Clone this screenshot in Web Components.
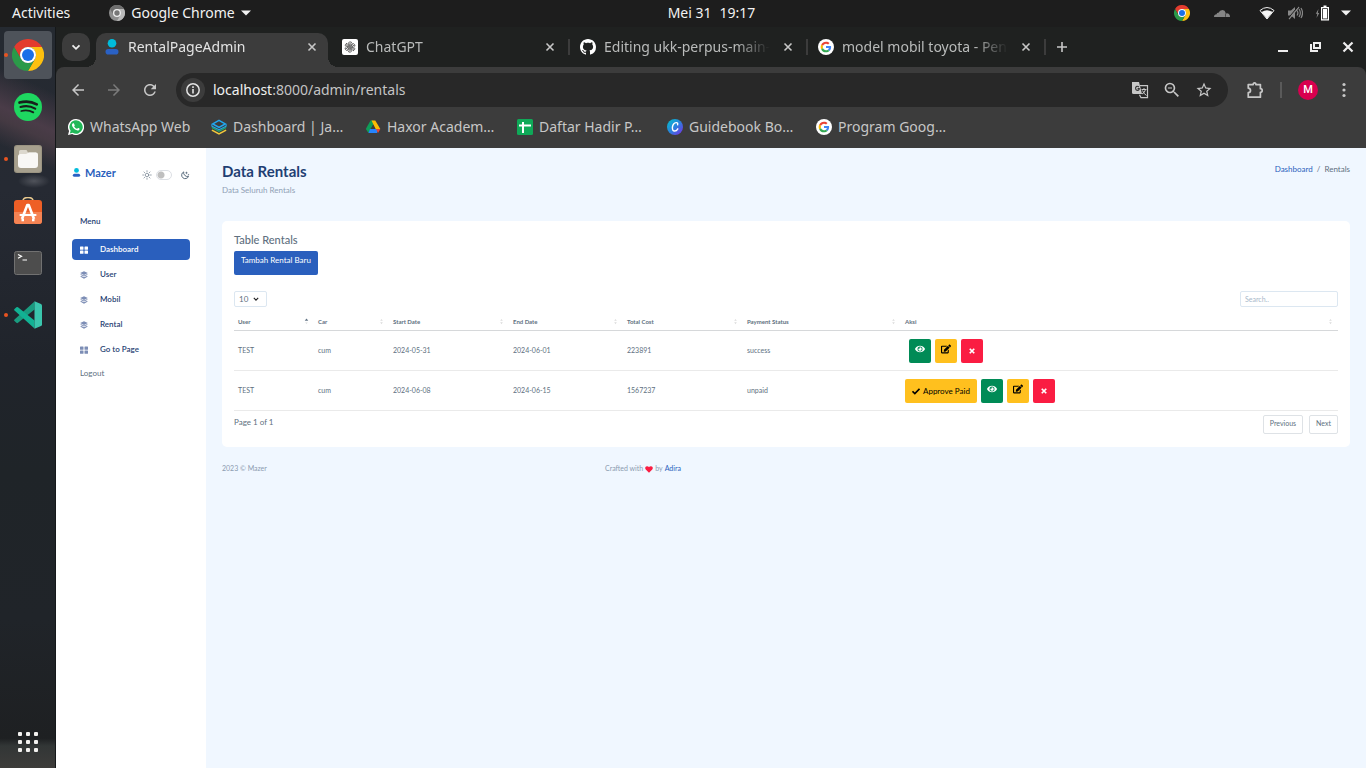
<!DOCTYPE html>
<html lang="id">
<head>
<meta charset="utf-8">
<title>RentalPageAdmin</title>
<style>
  html, body { height: 100%; margin: 0; }
  body { overflow: hidden; background: #1d1d1d; font-family: "Noto Sans", "Open Sans", sans-serif; }
</style>
</head>
<body>
<desk-top></desk-top>

<script>
const chromeLogo = (r, y, g, b) => `<svg viewBox="0 0 48 48"><path fill="${r}" d="M24 12h20.8A24 24 0 0 0 3.2 12l10.4 18A12 12 0 0 1 24 12z"/><path fill="${y}" d="M24 12h20.8A24 24 0 0 1 24 48l10.4-18A12 12 0 0 0 24 12z"/><path fill="${g}" d="M13.600 30L3.200 12A24 24 0 0 0 24 48l10.400-18A12 12 0 0 1 13.600 30z"/><circle cx="24" cy="24" r="12" fill="#fff"/><circle cx="24" cy="24" r="9" fill="${b}"/></svg>`;

const PETAL = 'M9.300 11.500V6.500q0-2.800 2.800-3 1.600 0 2.700 1.100l-4 2.300v5.300';

const ICONS = {
  chrome: chromeLogo('#e33b2e', '#fdc00f', '#2b9a49', '#1a6fe8'),
  chromeGray: `<svg viewBox="0 0 48 48"><circle cx="24" cy="24" r="24" fill="#8f8f8f"/><path fill="#b9b9b9" d="M24 12h20.800A24 24 0 0 1 24 48l10.400-18A12 12 0 0 0 24 12z"/><path fill="#6f6f6f" d="M24 12h20.800A24 24 0 0 0 3.200 12l8 14A13 13 0 0 1 24 12z"/><circle cx="24" cy="24" r="12" fill="#efefef"/><circle cx="24" cy="24" r="8" fill="#777"/></svg>`,
  spotify: `<svg viewBox="0 0 28 28"><circle cx="14" cy="14" r="14" fill="#1ed760"/><g fill="none" stroke="#17201b" stroke-linecap="round"><path stroke-width="2.600" d="M5.500 9.600c6-1.700 12.400-1 17.300 1.700"/><path stroke-width="2.200" d="M6.500 14c5-1.400 10.500-.8 14.700 1.600"/><path stroke-width="1.800" d="M7.300 18c4.300-1.100 8.500-.6 12 1.400"/></g></svg>`,
  files: `<svg viewBox="0 0 28 28"><rect width="28" height="28" rx="3" fill="#9b9482"/><rect x="1" y="1" width="26" height="26" rx="3" fill="#a7a08e"/><path fill="#dcd8ce" d="M5 6.500Q5 5 6.500 5h6L14 7.500h8V12H5z"/><path fill="#f8f7f5" d="M4 11.500Q4 9 6.500 9H12l3-1.500h7q2 0 2 2V20q0 3-3 3H7q-3 0-3-3z"/></svg>`,
  software: `<svg viewBox="0 2 28 28"><path d="M9 6q0-3.500 5-3.500t5 3.500" fill="none" stroke="#e8c98f" stroke-width="1.500"/><rect y="5" width="28" height="24" rx="3" fill="#ee5f26"/><path fill="#f58353" d="M0 17h28v9q0 3-3 3H3q-3 0-3-3z"/><path fill="none" stroke="#fff" stroke-width="2.600" stroke-linejoin="round" d="M8 24L13.300 10h1.400L20 24M7.500 25h2.500M18 25h2.500"/><path stroke="#fff" stroke-width="2.200" stroke-linecap="round" d="M6.500 20h15"/></svg>`,
  terminal: `<svg viewBox="0 0 28 28"><rect x=".5" y="2.500" width="27" height="23" rx="2" fill="#4d4d4d" stroke="#717171"/><path d="M4 5.500l3.500 1.800L4 9.200M8.500 11h4.500" fill="none" stroke="#fff" stroke-width="1.200"/></svg>`,
  vscode: `<svg viewBox="0 0 28 28"><path fill="#1a9c80" d="M20.500.5v8L4 21.800q-.8.700-1.600 0L.5 20q-.8-.8 0-1.600z"/><path fill="#12b294" d="M20.500 27.500v-8L4 6.300q-.8-.7-1.600 0L.5 8q-.8.800 0 1.600z"/><path fill="#3ac6ad" d="M20.500.3L27 3q1 .5 1 1.600v19q0 1-1 1.500l-6.500 2.700z"/></svg>`,
  apps: `<svg viewBox="0 0 20 20" fill="#f2f1ef"><rect width="4" height="4" rx="1"/><rect x="8" width="4" height="4" rx="1"/><rect x="16" width="4" height="4" rx="1"/><rect y="8" width="4" height="4" rx="1"/><rect x="8" y="8" width="4" height="4" rx="1"/><rect x="16" y="8" width="4" height="4" rx="1"/><rect y="16" width="4" height="4" rx="1"/><rect x="8" y="16" width="4" height="4" rx="1"/><rect x="16" y="16" width="4" height="4" rx="1"/></svg>`,
  triangle: `<svg viewBox="0 0 10 10"><path fill="currentColor" d="M0 2.500h10L5 7.500z"/></svg>`,
  cloud: `<svg viewBox="0 0 16 16"><path fill="#858585" d="M0 12q0-2.700 2.600-2.800Q2.800 7.600 4.500 7.800 5.800 5 8.500 5q2.600.2 3.200 3L11 12z"/><path fill="#858585" d="M12.200 8.400Q15.800 8 16 12h-4.600z"/></svg>`,
  wifi: `<svg viewBox="0 0 16 16"><path d="M1 5.500Q8-.5 15 5.500L8 14z" fill="none" stroke="#eee" stroke-width="1"/><path fill="#f4f4f4" d="M2.600 7Q8 3.500 13.400 7L8 13.800z"/></svg>`,
  mute: `<svg viewBox="0 0 16 16"><path fill="#888" d="M1 5.500h3L8 2v12l-4-3.500H1z"/><path d="M10 5.500q1.800 2.500 0 5M12 4q2.700 4 0 8M14 3q3 5 0 10M2 14L12 2" fill="none" stroke="#888" stroke-width="1.200"/><path d="M1 13.500L11 1.500" stroke="#1d1d1d" stroke-width="1"/></svg>`,
  battery: `<svg viewBox="0 0 16 16"><path fill="#8a8a8a" d="M3.500 4L.8 8.800h1.500L1.500 13 4.300 8H2.800z"/><path fill="#fff" fill-rule="evenodd" d="M8.500.5h3V2H14v13.500H6V2h2.500zM7.200 3.200v11h5.600v-11z"/><path fill="#fff" d="M8 4h4v9.500H8z"/></svg>`,
  mazer: `<svg viewBox="0 0 16 16"><circle cx="8" cy="4.300" r="4.300" fill="#00bcdc"/><rect x="1.500" y="10" width="13" height="5.600" rx="2.800" fill="#2a61c4"/></svg>`,
  close: `<svg viewBox="0 0 16 16"><path d="M4.500 4.500l7 7m0-7l-7 7" stroke="currentColor" stroke-width="1.600"/></svg>`,
  chevron: `<svg viewBox="0 0 16 16"><path d="M4.500 6.300L8 9.800l3.500-3.500" fill="none" stroke="currentColor" stroke-width="1.800"/></svg>`,
  plus: `<svg viewBox="0 0 16 16"><path d="M8 3v10M3 8h10" stroke="currentColor" stroke-width="1.600"/></svg>`,
  openai: `<svg viewBox="0 0 24 24"><rect width="24" height="24" rx="3" fill="#fff"/><g fill="none" stroke="#333" stroke-width="1.100" transform="translate(1 1) scale(.92)">${[0, 60, 120, 180, 240, 300].map(a => `<path transform="rotate(${a} 12 12)" d="${PETAL}"/>`).join('')}</g></svg>`,
  github: `<svg viewBox="0 0 16 16"><path fill="#fff" d="M8 0C3.580 0 0 3.580 0 8c0 3.540 2.290 6.530 5.470 7.590.4.070.55-.17.55-.38 0-.19-.01-.82-.01-1.490-2.010.37-2.530-.49-2.690-.94-.09-.23-.48-.94-.82-1.130-.28-.15-.68-.52-.01-.53.63-.01 1.080.58 1.230.82.72 1.210 1.870.87 2.330.66.07-.52.28-.87.51-1.070-1.780-.2-3.640-.89-3.640-3.950 0-.87.31-1.590.82-2.150-.08-.2-.36-1.020.08-2.120 0 0 .67-.21 2.200.82.64-.18 1.320-.27 2-.27s1.360.09 2 .27c1.530-1.040 2.200-.82 2.200-.82.44 1.100.16 1.920.08 2.120.51.56.82 1.270.82 2.150 0 3.070-1.870 3.750-3.650 3.950.29.25.54.73.54 1.480 0 1.070-.01 1.930-.01 2.200 0 .21.15.46.55.38A8.010 8.010 0 0 0 16 8c0-4.420-3.580-8-8-8z"/></svg>`,
  google: `<svg viewBox="-12 -12 72 72"><circle cx="24" cy="24" r="36" fill="#fff"/><path fill="#EA4335" d="M24 9.500c3.540 0 6.710 1.220 9.210 3.600l6.850-6.850C35.900 2.380 30.470 0 24 0 14.620 0 6.510 5.380 2.560 13.220l7.980 6.190C12.430 13.720 17.740 9.500 24 9.500z"/><path fill="#4285F4" d="M46.980 24.550c0-1.570-.15-3.090-.38-4.550H24v9.020h12.940c-.58 2.960-2.260 5.480-4.780 7.180l7.730 6c4.510-4.180 7.090-10.360 7.090-17.650z"/><path fill="#FBBC05" d="M10.530 28.590c-.48-1.450-.76-2.990-.76-4.590s.27-3.140.76-4.590l-7.980-6.190C.92 16.460 0 20.120 0 24c0 3.880.92 7.540 2.560 10.780l7.970-6.190z"/><path fill="#34A853" d="M24 48c6.480 0 11.930-2.130 15.890-5.810l-7.730-6c-2.150 1.450-4.920 2.300-8.160 2.300-6.260 0-11.570-4.220-13.470-9.910l-7.980 6.190C6.510 42.620 14.620 48 24 48z"/></svg>`,
  back: `<svg viewBox="0 0 24 24"><path fill="currentColor" d="M20 11H7.830l5.590-5.590L12 4l-8 8 8 8 1.410-1.410L7.830 13H20v-2z"/></svg>`,
  forward: `<svg viewBox="0 0 24 24"><path fill="currentColor" d="M12 4l-1.410 1.410L16.170 11H4v2h12.170l-5.580 5.590L12 20l8-8z"/></svg>`,
  reload: `<svg viewBox="0 0 24 24"><path fill="currentColor" d="M17.650 6.350C16.200 4.900 14.210 4 12 4c-4.420 0-7.990 3.580-7.990 8s3.570 8 7.990 8c3.730 0 6.840-2.550 7.730-6h-2.080c-.82 2.330-3.040 4-5.650 4-3.310 0-6-2.690-6-6s2.690-6 6-6c1.660 0 3.140.69 4.220 1.780L13 11h7V4l-2.350 2.350z"/></svg>`,
  info: `<svg viewBox="0 0 16 16"><circle cx="8" cy="8" r="6.200" fill="none" stroke="currentColor" stroke-width="1.500"/><path fill="currentColor" d="M7.200 7h1.600v4.500H7.200zM7.200 4.300h1.600v1.600H7.200z"/></svg>`,
  translate: `<svg viewBox="0 0 18 18"><path fill="#c7c7c7" d="M1 1h7l3 12H2.500Q1 13 1 11.500z"/><path d="M8 6Q5.500 4.300 4.600 6.800 4.500 9.500 7 9.400 8.500 9 8.300 7.600H6.600" fill="none" stroke="#333" stroke-width="1.100"/><path d="M9 4.700h7.500v12H10l-1.500-3" fill="none" stroke="#c7c7c7" stroke-width="1.200"/><path d="M10.500 8.500h5M13 7v1.500M14.500 8.500q-.8 3.500-3.500 4.500M11.500 9.500q1.500 3.500 4 5" fill="none" stroke="#c7c7c7"/></svg>`,
  zoomOut: `<svg viewBox="1 1 22 22"><path fill="currentColor" d="M15.500 14h-.79l-.28-.27A6.470 6.470 0 0 0 16 9.500 6.500 6.500 0 1 0 9.500 16c1.610 0 3.090-.59 4.230-1.570l.27.28v.79l5 4.990L20.490 19l-4.990-5zm-6 0C7.010 14 5 11.990 5 9.500S7.010 5 9.500 5 14 7.010 14 9.500 11.990 14 9.500 14zM7 8.800h5v1.500H7z"/></svg>`,
  star: `<svg viewBox="0 0 24 24"><path fill="currentColor" d="M22 9.240l-7.190-.62L12 2 9.190 8.630 2 9.240l5.460 4.730L5.820 21 12 17.270 18.180 21l-1.630-7.030L22 9.240zM12 15.400l-3.760 2.270 1-4.280-3.320-2.880 4.380-.38L12 6.100l1.710 4.040 4.380.38-3.320 2.880 1 4.280L12 15.400z"/></svg>`,
  puzzle: `<svg viewBox="0 0 20 20"><path d="M2.500 4H8q0-2 1.500-2T11 4h5v4.500q2 0 2 2t-2 2V18H2.500v-5q2.500-.3 2.500-2.500T2.500 8z" fill="none" stroke="currentColor" stroke-width="1.900" stroke-linejoin="round"/></svg>`,
  dots: `<svg viewBox="0 0 16 16" fill="currentColor"><circle cx="8" cy="2.500" r="1.600"/><circle cx="8" cy="8" r="1.600"/><circle cx="8" cy="13.500" r="1.600"/></svg>`,
  minimize: `<svg viewBox="0 0 16 16"><path fill="#eee" d="M2 11h10v2H2z"/></svg>`,
  restore: `<svg viewBox="0 0 16 16" fill="none" stroke="#eee" stroke-width="2"><path d="M6 4h6v5H6z"/><path d="M3 5v7h7"/></svg>`,
  closeWin: `<svg viewBox="0 0 16 16"><path d="M3.500 3.500l9 9m0-9l-9 9" stroke="#eee" stroke-width="2.200"/></svg>`,
  whatsapp: `<svg viewBox="0 0 24 24"><path fill="#fff" d="M12 0a12 12 0 1 1-5.700 22.500L0 24l1.600-6A12 12 0 0 1 12 0z"/><path fill="#20b858" d="M12 2a10 10 0 1 1-5 18.600l-4.200 1.100 1.100-4.100A10 10 0 0 1 12 2z"/><path fill="#fff" d="M17.500 14.400c-.3-.2-1.800-.9-2-1-.3-.1-.5-.1-.7.2l-.9 1.100c-.2.200-.3.200-.6.100-1.700-.8-2.900-1.600-4-3.500-.3-.5.300-.5.800-1.600.1-.2 0-.4 0-.5l-1-2.200c-.2-.6-.5-.5-.7-.5h-.6c-.2 0-.5.100-.8.400-.9 1-1.100 1.600-1 2.600.1 1.200.9 2.300 1 2.500 2.200 3.300 4.700 4.800 7.400 5.200 1.200.1 2.300-.5 2.600-1.200.3-.6.300-1.200.2-1.300z"/></svg>`,
  layers3: `<svg viewBox="0 0 18 18"><path d="M9 1.500L16 5.500 9 9.500 2 5.500z" fill="none" stroke="#22a7f0" stroke-width="1.800"/><path d="M1 9.500l8 4.300 8-4.300" fill="none" stroke="#1fa56e" stroke-width="1.600"/><path d="M1 12.500l8 4.300 8-4.300" fill="none" stroke="#f3c93b" stroke-width="1.800"/><path d="M1 6v2l8 4 8-4V6" fill="none" stroke="#22a7f0" stroke-width="1.200"/></svg>`,
  drive: `<svg viewBox="0 0 16 16"><path fill="#0f9d58" d="M5.500 1.500h2.700L9.500 4 3.500 14 .8 10z"/><path fill="#fbbc04" d="M6.500 1.500h3.800L15.300 10h-4.700z"/><path fill="#2684fc" d="M5 10h8.500L12 14H3.500z"/><path fill="#ea4335" d="M11 10h4.400L13 14z"/><path fill="#3c3c3c" d="M8 5.800L10.400 10H5.600z"/></svg>`,
  sheets: `<svg viewBox="0 0 16 16"><rect width="16" height="16" rx="1.500" fill="#0fa958"/><path d="M6 3v11M2 6.500h12" stroke="#fff" stroke-width="2"/></svg>`,
  canva: `<svg viewBox="0 0 16 16"><defs><linearGradient id="cg" x1="0" y1="0" x2="1" y2="1"><stop offset="0" stop-color="#00c4cc"/><stop offset=".5" stop-color="#2a82dd"/><stop offset="1" stop-color="#7d2ae8"/></linearGradient></defs><circle cx="8" cy="8" r="8" fill="url(#cg)"/><path d="M10.600 5.800q.6-2.300-1.400-2.200Q6 4 5.400 8.200q-.2 3.800 2.200 3.800 2 0 3.200-2.200" fill="none" stroke="#fff" stroke-width="1.400" stroke-linecap="round"/></svg>`,
  sun: `<svg viewBox="0 0 21 21"><g fill="none" stroke="#607080" stroke-width="1.300" stroke-linecap="round"><circle cx="10.500" cy="10.500" r="3.600"/><path d="M10.500 1.500v2.500M10.500 17v2.500M1.500 10.500H4M17 10.500h2.500M4.100 4.100L6 6M15 15l1.900 1.900M16.900 4.100L15 6M6 15l-1.900 1.900"/></g></svg>`,
  moon: `<svg viewBox="0 0 24 24"><path fill="none" stroke="#4c5f73" stroke-width="2.200" d="M9 4.500A8.500 8.500 0 1 0 20.500 15Q15.500 17 11.500 13T9 4.500z"/><path fill="#4c5f73" d="M15.500 3l1 3 3 1-3 1-1 3-1-3-3-1 3-1zM20.500 9l.7 1.700 1.800.6-1.800.7-.7 1.800-.7-1.800-1.800-.7 1.800-.6z"/></svg>`,
  grid: `<svg viewBox="0 0 16 16" fill="currentColor"><rect x="0" y="1" width="7" height="6.500" rx="1"/><rect x="9" y="1" width="7" height="6.500" rx="1"/><rect x="0" y="9" width="7" height="6.500" rx="1"/><rect x="9" y="9" width="7" height="6.500" rx="1"/></svg>`,
  stack: `<svg viewBox="0 0 16 16" fill="currentColor"><path d="M8 .5l7.700 3.600L8 7.800.3 4.100z"/><path d="M2.300 6.300L8 9l5.700-2.700 2 1L8 11.200.3 7.300z"/><path d="M2.300 9.800L8 12.500l5.700-2.700 2 1L8 15.500.3 10.800z"/></svg>`,
  eye: `<svg viewBox="0 0 576 512"><path fill="currentColor" d="M572.520 241.400C518.290 135.590 410.930 64 288 64S57.680 135.640 3.480 241.410a32.350 32.350 0 0 0 0 29.190C57.710 376.410 165.070 448 288 448s230.320-71.640 284.520-177.410a32.350 32.350 0 0 0 0-29.190zM288 400a144 144 0 1 1 144-144 143.930 143.930 0 0 1-144 144zm0-240a95.310 95.310 0 0 0-25.310 3.790 47.850 47.850 0 0 1-66.900 66.900A95.780 95.780 0 1 0 288 160z"/></svg>`,
  edit: `<svg viewBox="0 0 576 512"><path fill="currentColor" d="M402.600 83.200l90.200 90.200c3.800 3.800 3.800 10 0 13.800L274.400 405.600l-92.800 10.300c-12.400 1.400-22.900-9.100-21.500-21.500l10.300-92.800L388.800 83.200c3.800-3.800 10-3.800 13.800 0zm162-22.900l-48.800-48.800c-15.200-15.200-39.900-15.200-55.200 0l-35.400 35.400c-3.800 3.800-3.800 10 0 13.800l90.200 90.200c3.800 3.800 10 3.800 13.800 0l35.400-35.400c15.200-15.300 15.200-40 0-55.200zM384 346.200V448H64V128h229.800c3.200 0 6.200-1.300 8.500-3.500l40-40c7.600-7.600 2.200-20.500-8.500-20.500H48C21.500 64 0 85.500 0 112v352c0 26.500 21.500 48 48 48h352c26.500 0 48-21.500 48-48V306.200c0-10.700-12.900-16-20.500-8.500l-40 40c-2.200 2.300-3.500 5.300-3.500 8.500z"/></svg>`,
  times: `<svg viewBox="0 0 16 16"><path d="M3.500 3.500l9 9m0-9l-9 9" stroke="currentColor" stroke-width="3.400"/></svg>`,
  check: `<svg viewBox="0 0 16 16"><path d="M1 8.500L5.700 13 15 3.500" fill="none" stroke="currentColor" stroke-width="3.200"/></svg>`,
  heart: `<svg viewBox="0 0 16 16"><path fill="#fa1d42" d="M8 15.500L1.500 9Q-1 5.500 2 3q3-1.800 6 1 3-2.800 6-1 3 2.500.5 6z"/></svg>`,
  sortNone: `<svg viewBox="0 0 8 16"><path fill="#dcdcdc" d="M1 6.500h6L4 2zM1 9.500h6L4 14z"/></svg>`,
  sortAsc: `<svg viewBox="0 0 8 16"><path fill="#5f7183" d="M0 6.500h8L4 1z"/><path fill="#e4e4e4" d="M1 9.500h6L4 14z"/></svg>`
};

function define(name, css, html) {
  const template = document.createElement('template');
  const render = typeof html === 'function' ? html : () => html;
  customElements.define(name, class extends HTMLElement {
    connectedCallback() {
      if (this.shadowRoot) return;
      template.innerHTML = `<style>*{box-sizing:border-box}${css}</style>${render(this)}`;
      this.attachShadow({ mode: 'open' }).append(template.content.cloneNode(true));
    }
  });
}

define('ui-icon', `
  :host { display: inline-block; flex: none; width: var(--s, 16px); height: var(--s, 16px); }
  svg { display: block; width: 100%; height: 100%; }
`, el => ICONS[el.getAttribute('name')]);

/* ---------- Desktop shell ---------- */

define('desk-top', `
  :host { display: grid; grid-template: auto minmax(0, 1fr) / auto minmax(0, 1fr); height: 100vh; }
  top-bar { grid-column: 1 / -1; }
`, `
  <top-bar></top-bar>
  <app-dock></app-dock>
  <browser-window><rentals-app></rentals-app></browser-window>
`);

define('top-bar', `
  :host { display: grid; grid-template-columns: 1fr auto 1fr; align-items: center; height: 27px; padding-bottom: 1px; background: #1d1d1d; color: #f2f2f2; font-size: 14px; line-height: 24px; }
  div { display: flex; align-items: center; }
  .left { padding-left: 12px; }
  .app { margin-left: 39px; gap: 6px; }
  .app ui-icon:last-child { --s: 10px; }
  .clock { gap: 8px; padding-left: 57px; }
  .right { justify-content: flex-end; padding-right: 15px; }
`, `
  <div class="left"><span>Activities</span><div class="app"><ui-icon name="chromeGray"></ui-icon><span>Google Chrome</span><ui-icon name="triangle"></ui-icon></div></div>
  <div class="clock"><span>Mei 31</span><span>19:17</span></div>
  <div class="right">
    <ui-icon name="chrome" style="margin-right:24px"></ui-icon>
    <ui-icon name="cloud" style="margin-right:29px"></ui-icon>
    <ui-icon name="wifi" style="margin-right:12px"></ui-icon>
    <ui-icon name="mute" style="margin-right:12px"></ui-icon>
    <ui-icon name="battery" style="margin-right:10px"></ui-icon>
    <ui-icon name="triangle" style="--s:10px"></ui-icon>
  </div>
`);

define('app-dock', `
  :host { display: flex; flex-direction: column; gap: 4px; width: 56px; padding: 4px 4px 2px; border-right: 1px solid #15181a;
    background:
      radial-gradient(ellipse 16px 7px at 34px 154px, #50535b, transparent),
      linear-gradient(205deg, transparent 60px, #4a3c48 95px, #453a43 106px, transparent 130px) 0 0 / 100% 150px no-repeat,
      linear-gradient(#252a31, #262a33 22%, #20242b 45%, #1f2428 60%, #202429 80%, #1e2022 96%, #323636 97%, #3d3c3a); }
  .space { flex: 1; }
`, `
  <dock-item icon="chrome" active running></dock-item>
  <dock-item icon="spotify"></dock-item>
  <dock-item icon="files" running></dock-item>
  <dock-item icon="software"></dock-item>
  <dock-item icon="terminal"></dock-item>
  <dock-item icon="vscode" running></dock-item>
  <div class="space"></div>
  <dock-item icon="apps" small></dock-item>
`);

define('dock-item', `
  :host { display: block; position: relative; height: 48px; flex: none; }
  button { display: grid; place-items: center; width: 48px; height: 48px; border: 0; padding: 0; border-radius: 4px; background: none; --s: 28px; }
  :host([active]) button { background: #4e535a; --s: 32px; }
  :host([small]) button { --s: 20px; }
  :host([running])::before { content: ""; position: absolute; left: 0; top: 22px; width: 4px; height: 4px; border-radius: 50%; background: #e95420; }
`, el => `<button aria-label="${el.getAttribute('icon')}"><ui-icon name="${el.getAttribute('icon')}"></ui-icon></button>`);

/* ---------- Browser ---------- */

define('browser-window', `
  :host { display: grid; grid-template-rows: auto auto auto minmax(0, 1fr); min-width: 0; background: #1f2120; }
`, `
  <tab-strip></tab-strip>
  <nav-toolbar></nav-toolbar>
  <bookmark-bar></bookmark-bar>
  <slot></slot>
`);

define('tab-strip', `
  :host { display: flex; align-items: center; height: 40px; padding-left: 6px; color: #c7c7c7; }
  button { display: grid; place-items: center; border: 0; padding: 0; background: none; color: inherit; }
  .search { width: 28px; height: 28px; border-radius: 10px; background: #3c3c3c; color: #eee; margin-right: 2px; }
  .new { width: 32px; height: 40px; }
  .sep { width: 2px; height: 16px; background: #3c3c3c; }
  .win { margin-left: auto; display: flex; gap: 16px; padding-right: 10px; }
`, `
  <button class="search" aria-label="Search tabs"><ui-icon name="chevron"></ui-icon></button>
  <browser-tab icon="mazer" active>RentalPageAdmin</browser-tab>
  <browser-tab icon="openai">ChatGPT</browser-tab>
  <browser-tab icon="github" sep>Editing ukk-perpus-main-app</browser-tab>
  <browser-tab icon="google" sep>model mobil toyota - Penelusuran</browser-tab>
  <span class="sep"></span>
  <button class="new" aria-label="New tab"><ui-icon name="plus"></ui-icon></button>
  <div class="win">
    <button aria-label="Minimize"><ui-icon name="minimize"></ui-icon></button>
    <button aria-label="Restore"><ui-icon name="restore"></ui-icon></button>
    <button aria-label="Close window"><ui-icon name="closeWin"></ui-icon></button>
  </div>
`);

define('browser-tab', `
  :host { display: flex; flex: 0 1 238px; min-width: 0; height: 40px; position: relative; padding: 6px 2px 0 4px; color: #b9bbba; font-size: 14px; }
  .tab { position: relative; display: flex; flex: 1; min-width: 0; gap: 8px; align-items: center; padding: 0 8px 6px; border-radius: 10px 10px 0 0; }
  .label { flex: 1; min-width: 0; overflow: hidden; white-space: nowrap; line-height: 20px; mask-image: linear-gradient(90deg, #000 calc(100% - 36px), transparent calc(100% - 2px)); }
  button { display: grid; border: 0; padding: 0; background: none; color: #c7c7c7; }
  :host([active]) { color: #e3e3e3; }
  :host([active]) .tab { background: #3c3c3c; }
  :host([active]) .tab::before, :host([active]) .tab::after { content: ""; position: absolute; bottom: 0; width: 10px; height: 10px; }
  :host([active]) .tab::before { left: -10px; background: radial-gradient(circle at 0 0, transparent 10px, #3c3c3c 10px); }
  :host([active]) .tab::after { right: -10px; background: radial-gradient(circle at 100% 0, transparent 10px, #3c3c3c 10px); }
  :host([sep])::before { content: ""; position: absolute; left: 0; top: 12px; width: 2px; height: 16px; background: #3c3c3c; }
`, el => `<div class="tab"><ui-icon name="${el.getAttribute('icon')}"></ui-icon><span class="label"><slot></slot></span><button aria-label="Close tab"><ui-icon name="close"></ui-icon></button></div>`);

define('nav-toolbar', `
  :host { display: flex; align-items: center; height: 46px; padding: 0 14px 0 13px; border-radius: 8px 8px 0 0; background: #3c3c3c; color: #c7c7c7; }
  button { display: grid; place-items: center; border: 0; padding: 0; background: none; color: inherit; }
  .nav { --s: 18px; width: 18px; height: 18px; margin-right: 18px; }
  .nav[disabled] { color: #7b7b7b; }
  .omni { flex: 1; display: flex; align-items: center; gap: 14px; height: 34px; margin-right: 18px; margin-left: -1px; padding: 0 15px 0 5px; border-radius: 17px; background: #282828; --s: 18px; }
  .info { width: 24px; height: 24px; border-radius: 50%; background: #3c3c3c; color: #e3e3e3; margin-right: -6px; --s: 16px; }
  .url { flex: 1; font-size: 14px; line-height: 20px; padding-bottom: 1px; color: #c4c4c4; }
  .url b { font-weight: 400; color: #f0f0f0; }
  .sep { width: 2px; height: 16px; margin: 0 16px; background: #5a5a5a; }
  .avatar { width: 20px; height: 20px; border-radius: 50%; background: #d8004f; color: #fff; font: 500 11px/20px Roboto, sans-serif; text-align: center; margin-right: 18px; }
`, `
  <button class="nav" aria-label="Back"><ui-icon name="back"></ui-icon></button>
  <button class="nav" aria-label="Forward" disabled><ui-icon name="forward"></ui-icon></button>
  <button class="nav" aria-label="Reload"><ui-icon name="reload"></ui-icon></button>
  <div class="omni">
    <button class="info" aria-label="Site information"><ui-icon name="info"></ui-icon></button>
    <span class="url"><b>localhost</b>:8000/admin/rentals</span>
    <button aria-label="Translate"><ui-icon name="translate"></ui-icon></button>
    <button aria-label="Zoom"><ui-icon name="zoomOut"></ui-icon></button>
    <button aria-label="Bookmark"><ui-icon name="star"></ui-icon></button>
  </div>
  <button aria-label="Extensions" style="--s:18px"><ui-icon name="puzzle"></ui-icon></button>
  <span class="sep"></span>
  <span class="avatar">M</span>
  <button aria-label="Menu"><ui-icon name="dots"></ui-icon></button>
`);

define('bookmark-bar', `
  :host { display: grid; grid-template-columns: 143px 154px 152px 150px 149px auto; justify-content: start; align-items: center; height: 35px; padding: 0 12px 7px; background: #3c3c3c; }
  a { display: flex; align-items: center; gap: 6px; color: #c7c7c7; font-size: 14px; line-height: 20px; text-decoration: none; white-space: nowrap; }
`, `
  <a href="#"><ui-icon name="whatsapp"></ui-icon>WhatsApp Web</a>
  <a href="#"><ui-icon name="layers3"></ui-icon>Dashboard | Ja…</a>
  <a href="#"><ui-icon name="drive"></ui-icon>Haxor Academ…</a>
  <a href="#"><ui-icon name="sheets"></ui-icon>Daftar Hadir P…</a>
  <a href="#"><ui-icon name="canva"></ui-icon>Guidebook Bo…</a>
  <a href="#"><ui-icon name="google"></ui-icon>Program Goog…</a>
`);

/* ---------- Rentals application ---------- */

define('rentals-app', `
  :host { display: grid; grid-template-columns: 150px minmax(0, 1fr); min-height: 0; background: #f0f7ff; color: #607080; font: 8px/12px Lato, "Open Sans", sans-serif;
    --primary: #2a5fbd; --heading: #1f3f73; }
`, `<side-menu></side-menu><rentals-page></rentals-page>`);

define('side-menu', `
  :host { display: block; background: #fff; padding: 16px; }
  header { display: flex; align-items: center; height: 18px; color: var(--primary); }
  header a { display: flex; align-items: center; gap: 4px; flex: 1; padding-bottom: 1px; color: inherit; text-decoration: none; font-size: 11px; font-weight: 700; }
  .theme { display: flex; align-items: center; gap: 4px; --s: 10px; padding-top: 3px; }
  input { appearance: none; width: 16px; height: 10px; margin: 0 4px 0 0; border: 1px solid #dcdfe4; border-radius: 5px; background: radial-gradient(circle at 4px 4px, #bfbfbf 3px, transparent 4px); }
  h2 { margin: 33px 8px 12px; font-size: 8px; line-height: 12px; font-weight: 600; color: var(--heading); }
  nav { display: grid; gap: 4px; }
  .logout { display: block; margin: 7px 8px; color: #607080; text-decoration: none; }
`, `
  <header>
    <a href="#"><ui-icon name="mazer" style="--s:9px"></ui-icon>Mazer</a>
    <span class="theme"><ui-icon name="sun"></ui-icon><input type="checkbox" aria-label="Dark mode"><ui-icon name="moon"></ui-icon></span>
  </header>
  <h2>Menu</h2>
  <nav>
    <menu-link icon="grid" active>Dashboard</menu-link>
    <menu-link icon="stack">User</menu-link>
    <menu-link icon="stack">Mobil</menu-link>
    <menu-link icon="stack">Rental</menu-link>
    <menu-link icon="grid">Go to Page</menu-link>
  </nav>
  <a class="logout" href="#">Logout</a>
`);

define('menu-link', `
  :host { display: block; }
  a { display: flex; align-items: center; gap: 12px; height: 21px; padding: 0 8px 1px; border-radius: 4px; color: var(--heading); font-weight: 600; text-decoration: none; }
  ui-icon { --s: 8px; color: #7c8db5; margin-top: 2px; }
  :host([active]) a { background: var(--primary); color: #fff; }
  :host([active]) ui-icon { color: #fff; }
`, el => `<a href="#"><ui-icon name="${el.getAttribute('icon')}"></ui-icon><slot></slot></a>`);

define('rentals-page', `
  :host { display: block; padding: 14px 16px; min-width: 0; }
  .heading { display: flex; justify-content: space-between; align-items: flex-start; }
  h1 { margin: 0; font-size: 15px; line-height: 18px; font-weight: 700; color: var(--heading); }
  .sub { margin: 4px 0 25px; color: #8fa0b5; }
  .crumbs { display: flex; gap: 4px; margin-top: 1px; }
  .crumbs a { color: var(--primary); text-decoration: none; }
  footer { display: grid; grid-template-columns: 383px auto; margin-top: 15px; color: #8b9bb0; font-size: 7px; }
  footer p { margin: 0; display: flex; align-items: center; gap: 2px; }
  footer a { color: var(--primary); text-decoration: none; }
  footer ui-icon { --s: 8px; margin-top: 3px; }
`, `
  <div class="heading">
    <div><h1>Data Rentals</h1><p class="sub">Data Seluruh Rentals</p></div>
    <nav class="crumbs"><a href="#">Dashboard</a><span>/</span><span>Rentals</span></nav>
  </div>
  <rentals-card></rentals-card>
  <footer><p>2023 © Mazer</p><p>Crafted with <ui-icon name="heart"></ui-icon> by <a href="#">Adira</a></p></footer>
`);

define('action-button', `
  :host { display: inline-flex; }
  button { display: flex; align-items: center; justify-content: center; gap: 3px; height: 24px; min-width: 22px; padding: 0 7px; border: 0; border-radius: 2px; font: inherit; color: #000; background: #ffc01e; white-space: nowrap; --s: 8px; }
  :host([tone=success]) button { background: #008b56; color: #fff; }
  :host([tone=danger]) button { background: #fa1d42; color: #fff; }
  :host([raised]) button { padding: 0 6px 5px; --s: 10px; }
`, el => `<button aria-label="${el.getAttribute('label')}"><ui-icon name="${el.getAttribute('icon')}"></ui-icon><slot></slot></button>`);

const columns = ['User', 'Car', 'Start Date', 'End Date', 'Total Cost', 'Payment Status', 'Aksi'];
const rentals = [
  ['TEST', 'cum', '2024-05-31', '2024-06-01', '223891', 'success'],
  ['TEST', 'cum', '2024-06-08', '2024-06-15', '1567237', 'unpaid']
];
const actions = status => `<div class="actions ${status}">
  ${status === 'unpaid' ? '<action-button icon="check" label="Approve Paid">Approve Paid</action-button>' : ''}
  <action-button icon="eye" tone="success" label="View" raised></action-button>
  <action-button icon="edit" label="Edit" raised></action-button>
  <action-button icon="times" tone="danger" label="Delete"></action-button>
</div>`;

define('rentals-card', `
  :host { display: block; padding: 12px; border-radius: 5px; background: #fff; }
  h2 { margin: 0 0 5px; font-size: 11px; line-height: 13px; font-weight: 500; color: #607080; }
  .add { display: inline-block; height: 24px; padding: 3px 7px; border-radius: 2px; background: var(--primary); color: #fff; text-decoration: none; }
  .tools { display: flex; justify-content: space-between; margin: 16px 0 7px; }
  .pick { display: grid; align-items: center; }
  .pick > * { grid-area: 1 / 1; }
  .pick ui-icon { --s: 10px; justify-self: end; margin-right: 6px; color: #222; pointer-events: none; }
  select, input { appearance: none; height: 16px; margin: 0; padding: 0 4px; border: 1px solid #dce7f1; border-radius: 2px; background: #fff; color: #607080; font: inherit; }
  select { width: 33px; }
  input { width: 98px; font-size: 7px; }
  input::placeholder { color: #a9b8ca; }
  table { width: 100%; table-layout: fixed; border-collapse: collapse; }
  th { height: 16px; padding: 0 4px; border-bottom: 1px solid #d6d8da; text-align: left; font-size: 6px; line-height: 10px; font-weight: 700; }
  th div { display: flex; justify-content: space-between; align-items: center; --s: 7px; }
  td { height: 40px; padding: 0 4px; border-bottom: 1px solid #eaeaea; font-size: 7px; }
  .actions { display: flex; gap: 4px; padding-top: 2px; font-size: 8px; }
  .success { padding-left: 4px; }
  .bottom { display: flex; justify-content: space-between; align-items: flex-start; margin-top: 4px; padding-bottom: 1px; }
  .bottom p { margin: 1px 0; }
  .pages { display: flex; gap: 6px; }
  .pages button { height: 19px; padding: 0 6px 2px; border: 1px solid #dee2e6; border-radius: 2px; background: #fff; color: #607080; font: inherit; font-size: 7px; }
`, `
  <h2>Table Rentals</h2>
  <a class="add" href="#">Tambah Rental Baru</a>
  <div class="tools">
    <div class="pick"><select aria-label="Entries per page"><option>10</option><option>25</option></select><ui-icon name="chevron"></ui-icon></div>
    <input type="search" placeholder="Search.." aria-label="Search">
  </div>
  <table>
    <colgroup>${[80, 75, 120, 114, 120, 158].map(w => `<col style="width:${w}px">`).join('')}<col></colgroup>
    <thead><tr>${columns.map((c, i) => `<th scope="col"><div>${c}<ui-icon name="${i ? 'sortNone' : 'sortAsc'}"></ui-icon></div></th>`).join('')}</tr></thead>
    <tbody>${rentals.map(r => `<tr>${r.map(v => `<td>${v}</td>`).join('')}<td>${actions(r[5])}</td></tr>`).join('')}</tbody>
  </table>
  <div class="bottom"><p>Page 1 of 1</p><div class="pages"><button>Previous</button><button>Next</button></div></div>
`);
</script>
</body>
</html>
